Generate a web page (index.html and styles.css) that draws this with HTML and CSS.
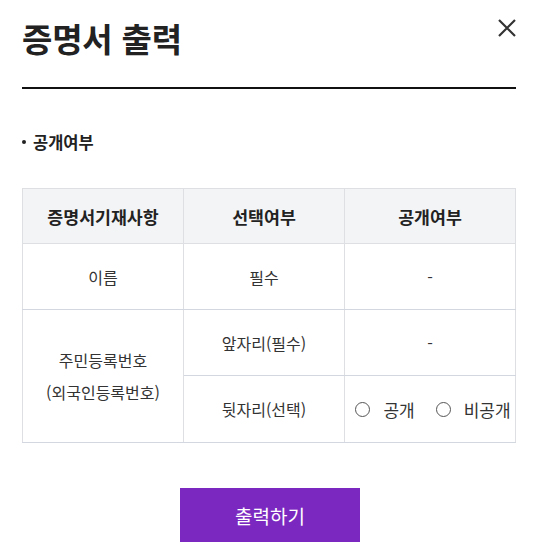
FILE: index.html
```html
<!DOCTYPE html>
<html lang="ko">
<head>
<meta charset="utf-8">
<link rel="stylesheet" href="styles.css">
</head>
<body>
<div class="modal">
  <div class="modal-head">
    <h1 class="modal-title">증명서 출력</h1>
    <button class="close-btn" aria-label="닫기">
      <svg width="20" height="20" viewBox="0 0 20 20"><path d="M2 2 L18 18 M18 2 L2 18" stroke="#333" stroke-width="2.2" fill="none"/></svg>
    </button>
  </div>
  <p class="section-title"><span class="bullet"></span>공개여부</p>
  <table class="info-table">
    <colgroup><col class="c1"><col class="c2"><col class="c3"></colgroup>
    <thead>
      <tr><th>증명서기재사항</th><th>선택여부</th><th>공개여부</th></tr>
    </thead>
    <tbody>
      <tr class="row-name"><td>이름</td><td>필수</td><td>-</td></tr>
      <tr class="row-id"><td rowspan="2" class="lh">주민등록번호<br>(외국인등록번호)</td><td>앞자리(필수)</td><td>-</td></tr>
      <tr class="row-back"><td>뒷자리(선택)</td><td class="radios"><label class="radio"><span class="circle"></span>공개</label><label class="radio"><span class="circle"></span>비공개</label></td></tr>
    </tbody>
  </table>
  <div class="actions"><button class="print-btn">출력하기</button></div>
</div>
</body>
</html>
```
FILE: styles.css
```css
* { box-sizing: border-box; }
html, body { margin: 0; padding: 0; background: #fff; }
body { font-family: "Noto Sans CJK KR", "Noto Sans", sans-serif; color: #333; }
.modal { padding: 0 18px 0 22px; }
.modal-head {
  display: flex; justify-content: space-between; align-items: flex-start;
  height: 89px; border-bottom: 2px solid #111;
  padding-top: 19px;
}
.modal-title { margin: 0; font-size: 33px; line-height: 38px; font-weight: 700; color: #222; letter-spacing: -0.2px; }
.close-btn { border: 0; background: none; padding: 0; margin: -1px -1px 0 0; width: 20px; height: 20px; cursor: pointer; }
.close-btn svg { display: block; }
.section-title { margin: 42px 0 0; font-size: 16.5px; line-height: 22px; font-weight: 700; color: #222; display: flex; align-items: center; }
.bullet { width: 4px; height: 4px; border-radius: 50%; background: #222; margin-right: 7px; }
.info-table { margin-top: 35px; width: 100%; border-collapse: collapse; table-layout: fixed; font-size: 16px; }
.c1 { width: 161px; }
.c2 { width: 161px; }
.info-table th, .info-table td { text-align: center; border: 1px solid #dedfe3; }
.info-table th { height: 55px; background: #f3f4f6; font-weight: 700; color: #222; font-size: 17.3px; }
.info-table td { height: 66px; color: #333; font-weight: 400; }
.info-table tbody td { border-bottom: 1px solid #d3d7e0; border-top: 1px solid #d3d7e0; }
.row-name td { border-bottom: 2px solid #d0d4de; }
.row-back td { height: 67px; }
.lh { line-height: 32px; }
.radios { padding: 0; font-size: 17px; }
.radio { display: inline-flex; align-items: center; margin: 0 15px 0 6px; }
.radio:last-child { margin-right: 0; }
.circle { width: 15px; height: 15px; border: 1.3px solid #555; border-radius: 50%; margin-right: 13px; }
.actions { display: flex; justify-content: center; padding-top: 45px; padding-left: 2px; }
.print-btn { width: 180px; height: 54px; border: 0; background: #7b28c0; color: #fff; font-family: inherit; font-size: 19px; }
```
